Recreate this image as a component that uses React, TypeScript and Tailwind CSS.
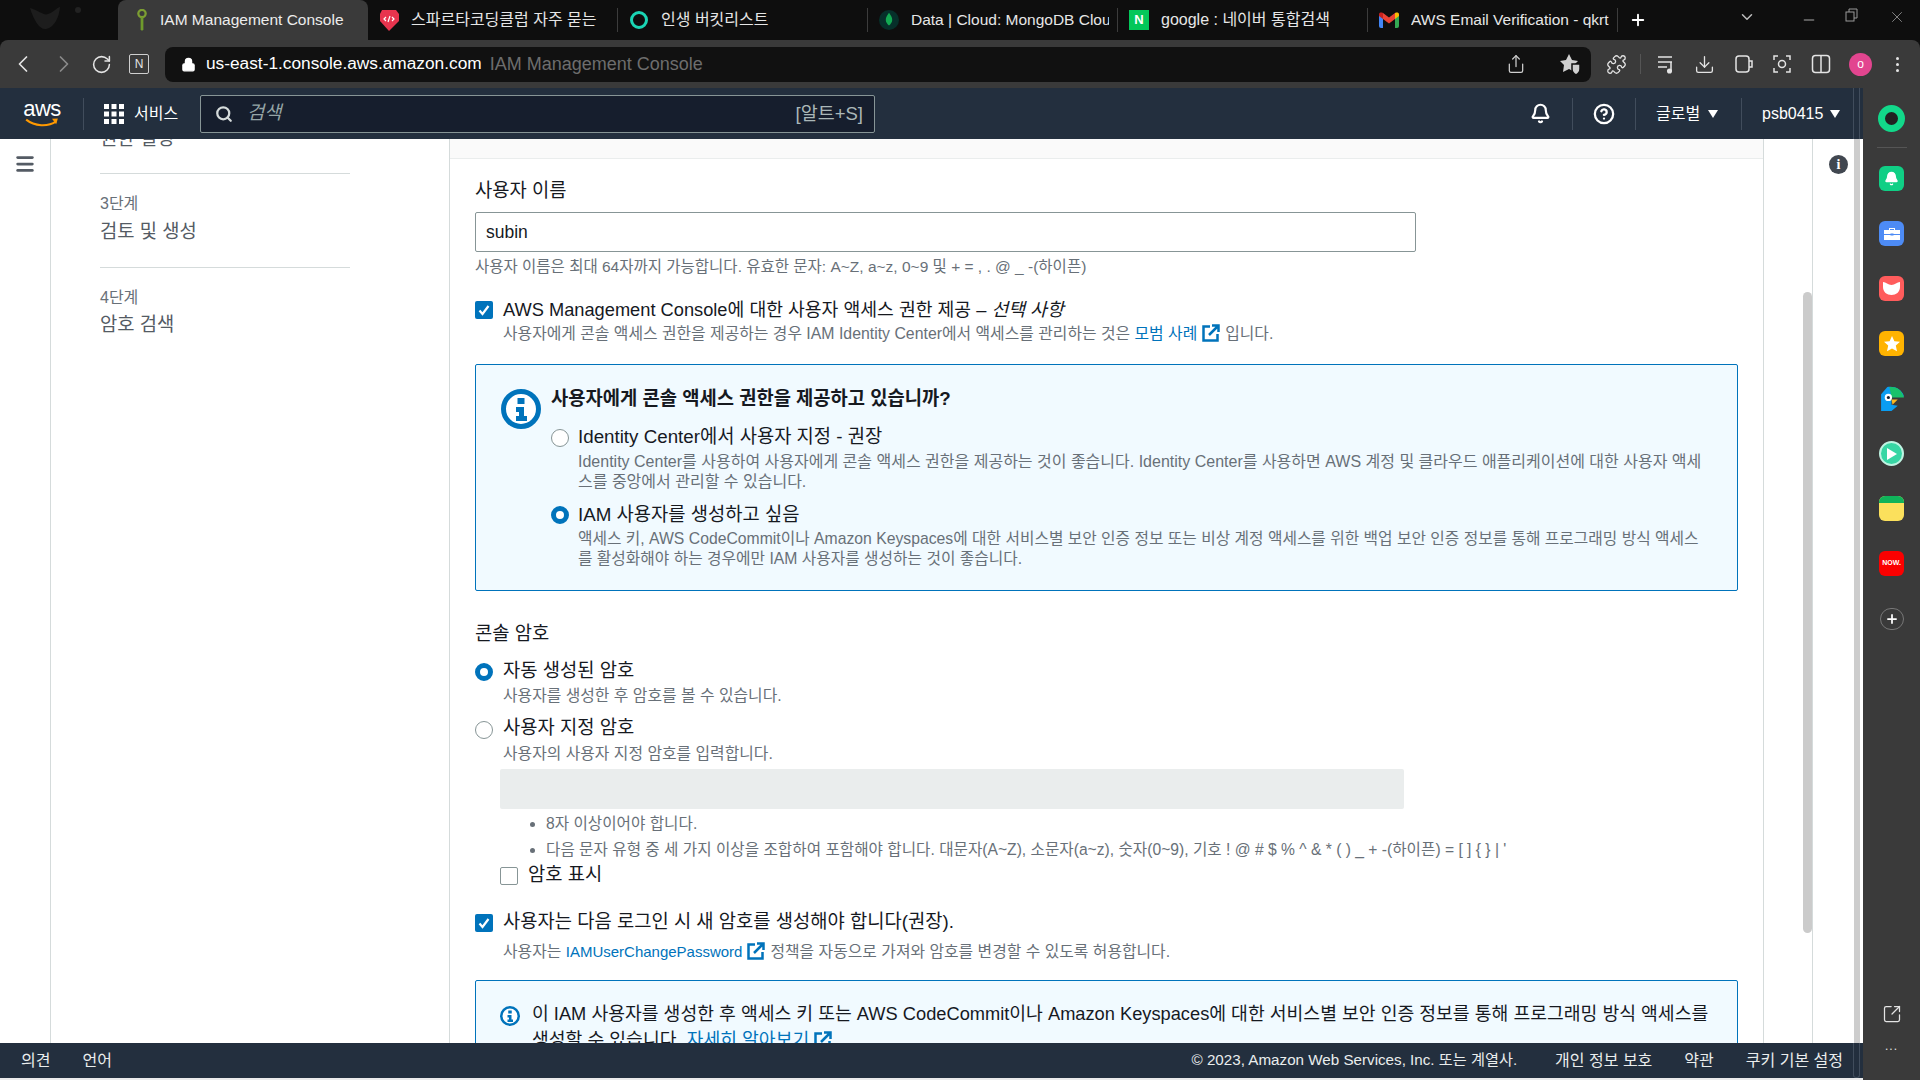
import {
  Bell,
  ChevronDown,
  ChevronLeft,
  ChevronRight,
  CircleHelp,
  Download,
  Lock,
  Menu,
  Minus,
  Plus,
  Puzzle,
  RotateCw,
  Search,
  Share,
  SquareArrowOutUpRight,
  X,
} from "lucide-react";
import type { ReactNode } from "react";

const tabs = [
  { title: "스파르타코딩클럽 자주 묻는", icon: "sparta", size: "text-[16px]" },
  { title: "인생 버킷리스트", icon: "ring", size: "text-[16px]" },
  { title: "Data | Cloud: MongoDB Clou", icon: "leaf", size: "text-[15.500px]" },
  { title: "google : 네이버 통합검색", icon: "naver", size: "text-[16px]" },
  { title: "AWS Email Verification - qkrt", icon: "gmail", size: "text-[15.500px]" },
];

function TabIcon({ name }: { name: string }) {
  if (name === "sparta")
    return (
      <svg viewBox="0 0 20 22" className="w-5 h-[22px]">
        <path d="M3 1h14l3 4v7l-10 10L1 12V5z" fill="#e8344e" />
        <path d="M7 8l-2 2 2 2M13 8l2 2-2 2M11 7l-2 6" stroke="#fff" strokeWidth="1.2" fill="none" />
      </svg>
    );
  if (name === "ring")
    return <div className="w-[18px] h-[18px] rounded-full border-[3px] border-[#1ad5b4]" />;
  if (name === "leaf")
    return (
      <div className="w-5 h-5 rounded-full bg-[#06302a] flex items-center justify-center">
        <svg viewBox="0 0 10 18" className="w-2 h-4">
          <path d="M5 0c3 4 4 6 4 9s-2 5-4 7c-2-2-4-4-4-7s1-5 4-9z" fill="#13aa52" />
        </svg>
      </div>
    );
  if (name === "naver")
    return (
      <div className="w-5 h-5 bg-[#03c75a] flex items-center justify-center text-white text-[13px] font-bold">
        N
      </div>
    );
  return (
    <svg viewBox="0 0 20 16" className="w-5 h-4">
      <path d="M0 3v11a2 2 0 0 0 2 2h2V6z" fill="#4285f4" />
      <path d="M20 3v11a2 2 0 0 1-2 2h-2V6z" fill="#34a853" />
      <path d="M16 1v6l4-3V2.500C20 .5 18 0 16 1z" fill="#fbbc04" />
      <path d="M4 1v6l6 4.500L16 7V1l-6 4.500z" fill="#ea4335" />
      <path d="M4 1C2 0 0 .5 0 2.500V4l4 3z" fill="#c5221f" />
    </svg>
  );
}

function TabStrip() {
  return (
    <div className="h-10 bg-[#0e0e0e] flex items-stretch text-[#e6e6e6]">
      <div className="w-[118px] overflow-hidden pl-[28px] pt-[6px]">
        <svg viewBox="0 0 60 30" className="w-[60px] h-[30px]">
          <path d="M2 2c10 3 14 8 18 6 6-2 8-6 12-7-1 10-5 20-14 22-6 1-12-8-16-21z" fill="#1d1d1d" />
          <circle cx="50" cy="4" r="3" fill="#222" />
        </svg>
      </div>
      <div className="w-[250px] bg-[#3a3a3a] rounded-t-lg flex items-center pl-[18px]">
        <svg viewBox="0 0 12 24" className="w-[12px] h-[22px]">
          <circle cx="6" cy="5" r="4" fill="none" stroke="#7c9e32" strokeWidth="2.500" />
          <path d="M4.500 9h3v13l-1.500 2-1.500-2z" fill="#6f9a2c" />
        </svg>
        <span className="ml-[12px] whitespace-nowrap text-[#ececec] text-[15.500px]">IAM Management Console</span>
      </div>
      {tabs.map((tab) => (
        <div key={tab.title} className="w-[250px] flex items-center">
          <div className="w-11 shrink-0 flex items-center justify-center ml-[-1px]">
            <TabIcon name={tab.icon} />
          </div>
          <span className={"w-[198px] overflow-hidden whitespace-nowrap " + tab.size}>{tab.title}</span>
          <div className="w-px h-[24px] bg-[#3c3c3c] ml-auto" />
        </div>
      ))}
      <div className="w-[40px] flex items-center justify-center">
        <Plus className="w-[18px] h-[18px] text-white" strokeWidth={2.5} />
      </div>
      <div className="flex-1 flex items-start pt-[8px] text-[#bdbdbd]">
        <ChevronDown className="w-[18px] h-[18px] ml-[80px]" />
        <Minus className="w-[16px] h-[16px] ml-[45px] mt-[4px] text-[#777]" />
        <svg viewBox="0 0 14 14" className="w-[14px] h-[14px] ml-[28px]" fill="none" stroke="#999">
          <rect x="1" y="4" width="8" height="9" />
          <path d="M4 4V1h8v9H9" />
        </svg>
        <X className="w-[18px] h-[18px] ml-[29px] text-[#888]" strokeWidth={1.25} />
      </div>
    </div>
  );
}

function Toolbar() {
  return (
    <div className="h-12 bg-[#3a3a3a] rounded-t-[8px] flex items-center text-[#e4e4e4] shrink-0">
      <ChevronLeft className="w-7 h-7 ml-[9px]" strokeWidth={1.5} />
      <ChevronRight className="w-7 h-7 ml-[13px] text-[#8a8a8a]" strokeWidth={1.5} />
      <RotateCw className="w-[21px] h-[21px] ml-[13px]" strokeWidth={1.75} />
      <div className="w-[20px] h-[20px] ml-[17px] border border-[#cfcfcf] rounded-[2px] flex items-center justify-center text-[12px]">
        N
      </div>
      <div className="w-[1426px] h-[35px] ml-[16px] bg-[#111111] rounded-lg flex items-center pl-[16px]">
        <Lock className="w-[15px] h-[15px] text-white fill-white" />
        <span className="ml-[10px] text-[17.300px] text-white whitespace-nowrap">us-east-1.console.aws.amazon.com</span>
        <span className="ml-[8px] text-[18px] text-[#6d6d6d] whitespace-nowrap">IAM Management Console</span>
        <Share className="w-[20px] h-[20px] ml-[803px] text-[#cfcfcf]" strokeWidth={1.5} />
        <svg viewBox="0 0 22 22" className="w-[22px] h-[22px] ml-[33px]" fill="#d0d0d0">
          <path d="M10 1l3 6 6 1-4 4 1 7-6-3-6 3 1-7-4-4 6-1z" />
          <path d="M13 11h8v5c0 3-2 5-4 6-2-1-4-3-4-6z" stroke="#111" strokeWidth="1.500" />
        </svg>
      </div>
      <Puzzle className="w-[21px] h-[21px] ml-[15px]" strokeWidth={1.5} />
      <div className="w-px h-[20px] bg-[#555] ml-[13px]" />
      <svg viewBox="0 0 20 20" className="w-[20px] h-[20px] ml-[16px]" fill="none" stroke="#e4e4e4" strokeWidth="1.500">
        <path d="M1 3h14M1 8h14M1 13h9M14 8v9" />
        <circle cx="12.500" cy="17" r="1.800" fill="#e4e4e4" />
      </svg>
      <Download className="w-[21px] h-[21px] ml-[17px]" strokeWidth={1.5} />
      <svg viewBox="0 0 20 20" className="w-[20px] h-[20px] ml-[19px]" fill="none" stroke="#e4e4e4" strokeWidth="1.500">
        <rect x="2" y="2" width="13" height="16" rx="3" />
        <path d="M15 7h3v6h-3" />
      </svg>
      <svg viewBox="0 0 20 20" className="w-[20px] h-[20px] ml-[18px]" fill="none" stroke="#e4e4e4" strokeWidth="1.500">
        <path d="M2 6V2h4M14 2h4v4M18 14v4h-4M6 18H2v-4" />
        <circle cx="10" cy="10" r="3.500" />
      </svg>
      <svg viewBox="0 0 20 20" className="w-[20px] h-[20px] ml-[19px]" fill="none" stroke="#e4e4e4" strokeWidth="1.500">
        <rect x="1.500" y="1.500" width="17" height="17" rx="3" />
        <path d="M10 2v16" />
      </svg>
      <div className="w-[23px] h-[23px] ml-[18px] rounded-full bg-[#e2458f] flex items-center justify-center text-[12px] text-white">
        o
      </div>
      <div className="ml-[24px] flex flex-col gap-[3px]">
        <div className="w-[3px] h-[3px] rounded-full bg-[#e4e4e4]" />
        <div className="w-[3px] h-[3px] rounded-full bg-[#e4e4e4]" />
        <div className="w-[3px] h-[3px] rounded-full bg-[#e4e4e4]" />
      </div>
    </div>
  );
}

function NavDivider() {
  return <div className="w-px h-[32px] bg-[#414d5c]" />;
}

function Caret({ className = "" }: { className?: string }) {
  return (
    <svg viewBox="0 0 10 8" className={"w-[10px] h-[8px] " + className}>
      <path d="M0 0h10L5 8z" fill="#fff" />
    </svg>
  );
}

function TopNav() {
  return (
    <div className="h-[51px] bg-[#232f3e] flex items-center text-white text-[16px] shrink-0">
      <div className="w-[40px] ml-[22px] flex flex-col items-center">
        <span className="text-[22px] leading-[19px] font-normal tracking-[-0.5px]">aws</span>
        <svg viewBox="0 0 40 12" className="w-[40px] h-[10px]">
          <path d="M1 2c10 8 26 9 36 2" stroke="#ff9900" strokeWidth="2.500" fill="none" />
          <path d="M32 1l7-.5-2 7z" fill="#ff9900" />
        </svg>
      </div>
      <div className="ml-[21px]">
        <NavDivider />
      </div>
      <svg viewBox="0 0 20 20" className="w-5 h-5 ml-[20px]" fill="#fff">
        {[0, 7.5, 15].flatMap((x) =>
          [0, 7.5, 15].map((y) => <rect key={`${x}-${y}`} x={x} y={y} width="5" height="5" />)
        )}
      </svg>
      <span className="ml-[10px] w-[46px] whitespace-nowrap">서비스</span>
      <div className="ml-[20px] w-[675px] h-[38px] bg-[#161e2d] border border-[#879596] rounded-[2px] flex items-center pl-[14px] pr-[11px]">
        <Search className="w-[18px] h-[18px] text-[#d5dbdb]" strokeWidth={3} />
        <span className="ml-[14px] italic text-[18.750px] text-[#95a5a6]">검색</span>
        <span className="ml-auto text-[18.500px] text-[#aab7b8]">[알트+S]</span>
      </div>
      <Bell className="w-[21px] h-[21px] ml-[655px]" strokeWidth={2.5} />
      <div className="ml-[21px]">
        <NavDivider />
      </div>
      <CircleHelp className="w-[22px] h-[22px] ml-[20px]" strokeWidth={2.5} />
      <div className="ml-[20px]">
        <NavDivider />
      </div>
      <span className="ml-[20px] w-[46px] whitespace-nowrap">글로벌</span>
      <Caret className="ml-[6px]" />
      <div className="ml-[23px]">
        <NavDivider />
      </div>
      <span className="ml-[20px] w-[62px] whitespace-nowrap">psb0415</span>
      <Caret className="ml-[6px]" />
      <div className="ml-auto mr-[3px] w-[7px] h-full border-x border-[#414d5c]" />
    </div>
  );
}

function Checkbox({ checked = false, className = "" }: { checked?: boolean; className?: string }) {
  if (!checked)
    return <div className={"w-[18px] h-[18px] shrink-0 bg-white border border-[#879596] rounded-[2px] " + className} />;
  return (
    <div className={"w-[18px] h-[18px] shrink-0 bg-[#0073bb] rounded-[2px] flex items-center justify-center " + className}>
      <svg viewBox="0 0 14 14" className="w-[14px] h-[14px]">
        <path d="M2.500 7.500l3 3.500 6-8" stroke="#fff" strokeWidth="2.200" fill="none" />
      </svg>
    </div>
  );
}

function Radio({ checked = false, className = "" }: { checked?: boolean; className?: string }) {
  return (
    <div
      className={
        (checked
          ? "w-[18px] h-[18px] shrink-0 rounded-full bg-white border-[5px] border-[#0073bb] "
          : "w-[18px] h-[18px] shrink-0 rounded-full bg-white border border-[#879596] ") + className
      }
    />
  );
}

function Label({ children, className = "" }: { children: ReactNode; className?: string }) {
  return <div className={"text-[18.750px] leading-[24px] text-[#16191f] whitespace-nowrap " + className}>{children}</div>;
}

function Hint({ children, className = "" }: { children: ReactNode; className?: string }) {
  return <div className={"text-[15.850px] leading-[20px] text-[#687078] whitespace-nowrap " + className}>{children}</div>;
}

// the console's external link glyph: heavy square with a corner arrow
function ExtIcon() {
  return (
    <svg viewBox="0 0 18 18" className="inline-block w-[18px] h-[18px] mx-[5px] align-[-3px]" fill="none" stroke="#0073bb" strokeWidth="2.500">
      <path d="M8 2.500H1.500v14h14V10" />
      <path d="M7 11l9-9M10 1.500h6.500V8" />
    </svg>
  );
}

function BigInfo({ className }: { className: string }) {
  return (
    <svg viewBox="0 0 40 40" className={className}>
      <circle cx="20" cy="20" r="17.500" fill="#fff" stroke="#0073bb" strokeWidth="5" />
      <rect x="16.500" y="9" width="7" height="6" fill="#0073bb" />
      <path d="M15 18h8v9h3v5H15v-5h3v-4h-3z" fill="#0073bb" />
    </svg>
  );
}

function StepNav() {
  return (
    <div className="w-[398px] shrink-0 h-full overflow-hidden pl-[49px]">
      <div className="w-[250px] mt-[-12px]">
        <div className="text-[18.750px] leading-[24px] text-[#545b64]">권한 설정</div>
        <div className="h-px bg-[#d5dbdb] mt-[22px]" />
        <div className="text-[16px] leading-[20px] text-[#687078] mt-[20px]">3단계</div>
        <div className="text-[18.750px] leading-[24px] text-[#545b64] mt-[6px]">검토 및 생성</div>
        <div className="h-px bg-[#d5dbdb] mt-[23px]" />
        <div className="text-[16px] leading-[20px] text-[#687078] mt-[20px]">4단계</div>
        <div className="text-[18.750px] leading-[24px] text-[#545b64] mt-[5px]">암호 검색</div>
      </div>
    </div>
  );
}

function UserForm() {
  return (
    <div className="w-[1315px] shrink-0 h-full overflow-hidden border-x border-[#d5dbdb]">
      <div className="h-[19px] bg-[#fafafa] border-b border-[#eaeded] box-content" />
      <div className="pl-[25px] pr-[25px]">
        <Label className="mt-[20px]">사용자 이름</Label>
        <div className="mt-[9px] w-[941px] h-[40px] border border-[#879596] rounded-[2px] flex items-center pl-[10px] text-[17.500px] text-[#16191f]">
          subin
        </div>
        <div className="mt-[5px] text-[15.500px] leading-[20px] text-[#687078] whitespace-nowrap">
          사용자 이름은 최대 64자까지 가능합니다. 유효한 문자: A~Z, a~z, 0~9 및 + = , . @ _ -(하이픈)
        </div>

        <div className="mt-[21px] flex items-center gap-[10px]">
          <Checkbox checked />
          <div className="text-[18.250px] leading-[24px] text-[#16191f] whitespace-nowrap">
            AWS Management Console에 대한 사용자 액세스 권한 제공 – <span className="italic">선택 사항</span>
          </div>
        </div>
        <Hint className="mt-[2px] ml-[28px]">
          사용자에게 콘솔 액세스 권한을 제공하는 경우 IAM Identity Center에서 액세스를 관리하는 것은{" "}
          <span className="text-[#0073bb]">모범 사례</span>
          <ExtIcon />
          입니다.
        </Hint>

        <div className="mt-[20px] h-[227px] border border-[#0073bb] rounded-[2px] bg-[#f1faff] flex pl-[25px] pt-[22px] gap-[10px]">
          <BigInfo className="mt-[2px] w-[40px] h-[40px] shrink-0" />
          <div>
            <div className="text-[18.750px] leading-[24px] font-bold text-[#16191f]">사용자에게 콘솔 액세스 권한을 제공하고 있습니까?</div>
            <div className="mt-[14px] flex gap-[9px]">
              <Radio className="mt-[4px]" />
              <div>
                <Label>Identity Center에서 사용자 지정 - 권장</Label>
                <div className="mt-[3px] text-[16px] leading-[19.500px] text-[#687078] whitespace-nowrap">
                  Identity Center를 사용하여 사용자에게 콘솔 액세스 권한을 제공하는 것이 좋습니다. Identity Center를 사용하면 AWS 계정 및 클라우드 애플리케이션에 대한 사용자 액세
                  <br />
                  스를 중앙에서 관리할 수 있습니다.
                </div>
              </div>
            </div>
            <div className="mt-[12px] flex gap-[9px]">
              <Radio checked className="mt-[3px]" />
              <div>
                <Label>IAM 사용자를 생성하고 싶음</Label>
                <div className="mt-[2px] text-[15.750px] leading-[19.500px] text-[#687078] whitespace-nowrap">
                  액세스 키, AWS CodeCommit이나 Amazon Keyspaces에 대한 서비스별 보안 인증 정보 또는 비상 계정 액세스를 위한 백업 보안 인증 정보를 통해 프로그래밍 방식 액세스
                  <br />
                  를 활성화해야 하는 경우에만 IAM 사용자를 생성하는 것이 좋습니다.
                </div>
              </div>
            </div>
          </div>
        </div>

        <Label className="mt-[31px]">콘솔 암호</Label>
        <div className="mt-[13px] flex gap-[10px]">
          <Radio checked className="mt-[4px]" />
          <Label>자동 생성된 암호</Label>
        </div>
        <Hint className="mt-[3px] ml-[28px]">사용자를 생성한 후 암호를 볼 수 있습니다.</Hint>
        <div className="mt-[10px] flex gap-[10px]">
          <Radio className="mt-[5px]" />
          <Label>사용자 지정 암호</Label>
        </div>
        <Hint className="mt-[4px] ml-[28px]">사용자의 사용자 지정 암호를 입력합니다.</Hint>
        <div className="mt-[5px] ml-[25px] w-[904px] h-[40px] bg-[#eaeded] rounded-[2px]" />
        <ul className="mt-[5px] ml-[50px] list-disc pl-[21px] marker:text-[#687078] text-[15.650px] leading-[20px] text-[#687078] whitespace-nowrap">
          <li>8자 이상이어야 합니다.</li>
          <li className="mt-[6px]">
            다음 문자 유형 중 세 가지 이상을 조합하여 포함해야 합니다. 대문자(A~Z), 소문자(a~z), 숫자(0~9), 기호 ! @ # $ % ^ &amp; * ( ) _ + -(하이픈) = [ ] {"{ }"} | '
          </li>
        </ul>
        <div className="mt-[3px] ml-[25px] flex items-center gap-[10px]">
          <Checkbox className="mt-[2px]" />
          <Label>암호 표시</Label>
        </div>

        <div className="mt-[23px] flex items-center gap-[10px]">
          <Checkbox checked className="mt-[2px]" />
          <Label>사용자는 다음 로그인 시 새 암호를 생성해야 합니다(권장).</Label>
        </div>
        <Hint className="mt-[8px] ml-[28px]">
          사용자는 <span className="text-[#0073bb] text-[15px]">IAMUserChangePassword</span>
          <ExtIcon />
          정책을 자동으로 가져와 암호를 변경할 수 있도록 허용합니다.
        </Hint>

        <div className="mt-[18px] h-[80px] border border-[#0073bb] rounded-[2px] bg-[#f1faff] flex pl-[24px] pt-[20px] gap-[12px]">
          <BigInfo className="mt-[5px] w-[20px] h-[20px] shrink-0" />
          <div className="text-[18.250px] leading-[26px] text-[#16191f] whitespace-nowrap">
            이 IAM 사용자를 생성한 후 액세스 키 또는 AWS CodeCommit이나 Amazon Keyspaces에 대한 서비스별 보안 인증 정보를 통해 프로그래밍 방식 액세스를
            <br />
            생성할 수 있습니다. <span className="text-[#0073bb]">자세히 알아보기</span>
            <ExtIcon />
          </div>
        </div>
      </div>
    </div>
  );
}

function Footer() {
  return (
    <div className="h-[35px] bg-[#232f3e] shrink-0 flex items-center text-[16px] text-[#eaeded] pl-[21px] whitespace-nowrap">
      <span>의견</span>
      <span className="ml-[32px]">언어</span>
      <span className="ml-auto text-[15.200px]">© 2023, Amazon Web Services, Inc. 또는 계열사.</span>
      <span className="ml-[38px]">개인 정보 보호</span>
      <span className="ml-[32px]">약관</span>
      <span className="ml-[32px]">쿠키 기본 설정</span>
      <div className="ml-[10px] mr-[3px] w-[7px] h-full border-x border-b rounded-b-[3px] border-[#414d5c]" />
    </div>
  );
}

function ExtensionBar() {
  return (
    <div className="w-[57px] shrink-0 bg-[#3a3a3a] flex flex-col items-center pt-[17px]">
      <div className="w-[27px] h-[27px] rounded-full border-[7px] border-[#12d88a] bg-[#222]" />
      <div className="w-[30px] h-px bg-[#555] mt-[15px] mb-[18px]" />
      <div className="flex flex-col gap-[30px]">
        <div className="w-[25px] h-[25px] rounded-[6px] bg-[#10cf85] flex items-center justify-center">
          <Bell className="w-[15px] h-[15px] text-white fill-white" />
        </div>
        <div className="w-[25px] h-[25px] rounded-[6px] bg-[#4d8bf5] flex items-center justify-center">
          <svg viewBox="0 0 16 14" className="w-[16px] h-[14px]">
            <path d="M5 3V1h6v2M0 3h16v10H0z" fill="#fff" />
            <path d="M6 2h4v1H6zM0 7h16v1H0zM6.500 6.500h3v2h-3z" fill="#4d8bf5" />
          </svg>
        </div>
        <div className="w-[25px] h-[25px] rounded-[6px] bg-[#ff5c5c] flex items-center justify-center">
          <svg viewBox="0 0 17 13" className="w-[17px] h-[13px]">
            <path d="M0 0c3 0 5 3 8.500 3S14 0 17 0v5c0 5-4 8-8.500 8S0 10 0 5z" fill="#fff" />
          </svg>
        </div>
        <div className="w-[25px] h-[25px] rounded-[6px] bg-[#ffb300] flex items-center justify-center">
          <svg viewBox="0 0 16 16" className="w-[16px] h-[16px]">
            <path d="M8 0l2.400 5.200 5.600.6-4.200 3.800 1.200 5.600L8 12.400l-5 2.800 1.200-5.600L0 5.800l5.600-.6z" fill="#fff" />
          </svg>
        </div>
        <svg viewBox="0 0 24 24" className="w-[25px] h-[25px]">
          <path d="M2 24V8l6-7c7-1 14 2 16 9H12v8l6 1-6 5z" fill="#0a9df2" />
          <path d="M10 1c7-1 12 3 14 10H12z" fill="#18c26b" />
          <circle cx="9" cy="11" r="3.500" fill="#fff" />
          <circle cx="9" cy="11" r="1.500" fill="#123" />
          <path d="M12 13h6l-5 5z" fill="#fbb820" />
        </svg>
        <div className="w-[25px] h-[25px] rounded-full bg-[#37d6a4] border-[2px] border-[#bff3e2] flex items-center justify-center">
          <svg viewBox="0 0 10 12" className="w-[10px] h-[12px]">
            <path d="M0 0l10 6-10 6z" fill="#fff" />
          </svg>
        </div>
        <div className="w-[25px] h-[25px] rounded-[6px] overflow-hidden bg-[#fbe05c]">
          <div className="h-[7px] bg-[#0fb35a]" />
        </div>
        <div className="w-[25px] h-[25px] rounded-[6px] bg-[#fb0000] flex items-center justify-center text-[7px] font-bold text-white">
          NOW.
        </div>
        <div className="w-[24px] h-[22px] mt-[2px] mx-auto rounded-full border border-[#777] flex items-center justify-center">
          <Plus className="w-[14px] h-[14px] text-white" strokeWidth={3} />
        </div>
      </div>
      <SquareArrowOutUpRight className="w-[20px] h-[20px] mt-[374px] text-[#e4e4e4]" strokeWidth={1.5} />
      <div className="mt-[16px] text-[12px] leading-[12px] tracking-[1px] text-[#e4e4e4]">...</div>
    </div>
  );
}

export default function App() {
  return (
    <div className="w-[1920px] h-[1080px] overflow-hidden flex flex-col bg-[#0e0e0e] font-['Liberation_Sans','Noto_Sans_CJK_KR',sans-serif]">
      <TabStrip />
      <Toolbar />
      <div className="flex-1 flex min-h-0">
        <div className="w-[1863px] shrink-0 flex flex-col bg-[#ebebeb] pb-[2px]">
          <TopNav />
          <div className="flex-1 min-h-0 flex bg-white">
            <div className="w-[51px] shrink-0 border-r border-[#d5dbdb] flex justify-center pt-[14px]">
              <Menu className="w-[22px] h-[22px] text-[#545b64]" strokeWidth={3} />
            </div>
            <StepNav />
            <UserForm />
            <div className="w-[48px] shrink-0 flex justify-end">
              <div className="w-[9px] h-[641px] mt-[153px] bg-[#cbcbcb] rounded-full" />
            </div>
            <div className="w-[42px] shrink-0 border-l border-[#d5dbdb] pl-[16px] pt-[16px]">
              <div className="w-[19px] h-[19px] rounded-full bg-[#414750] flex items-center justify-center text-white text-[14px] font-bold font-['Liberation_Serif',serif]">
                i
              </div>
            </div>
            <div className="w-[6px] shrink-0 bg-[#cdcdcd]" />
          </div>
          <Footer />
        </div>
        <ExtensionBar />
      </div>
    </div>
  );
}
